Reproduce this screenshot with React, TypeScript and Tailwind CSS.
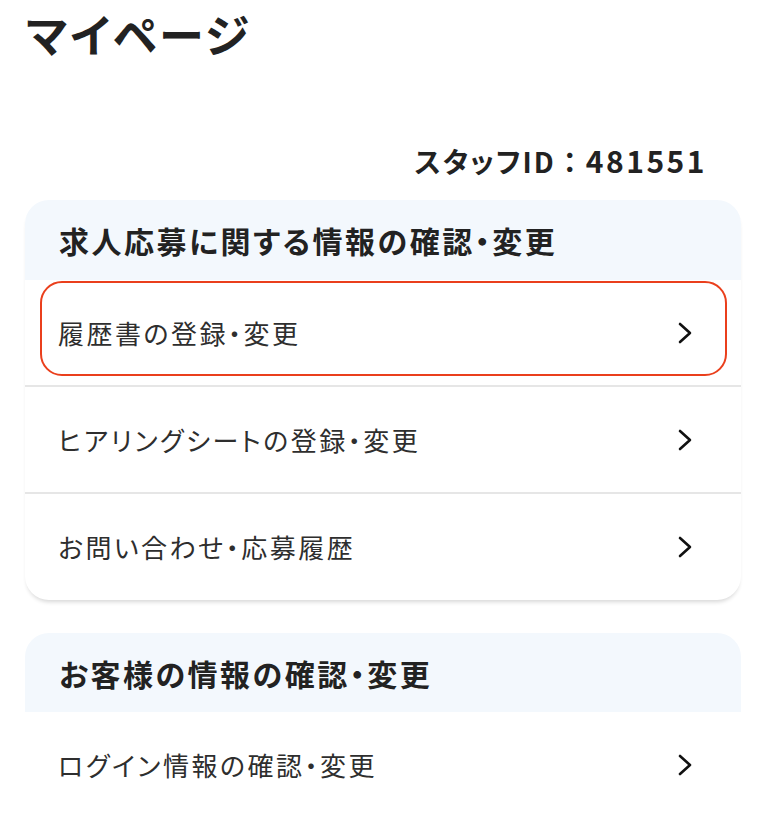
import React from "react";

const Chevron = () => (
  <svg width="16" height="24" viewBox="0 0 16 24" fill="none" aria-hidden="true">
    <polyline points="3,3 13,12 3,21" stroke="#111" strokeWidth="2.6" strokeLinecap="round" strokeLinejoin="round" />
  </svg>
);

type RowProps = { label: string; divider?: boolean; highlight?: boolean; h: string };

const Row = ({ label, divider, highlight, h }: RowProps) => (
  <div className={`relative ${h} ${divider ? "border-b-2 border-[#e6e6e6]" : ""}`}>
    <div className="flex h-full items-center justify-between pl-[33px] pr-[48px]">
      <span className="text-[26px] leading-none tracking-[2.5px] text-[#2e2e2e] [font-feature-settings:'palt']">{label}</span>
      <Chevron />
    </div>
    {highlight && (
      <div className="pointer-events-none absolute left-[15px] right-[14px] top-[1px] h-[95px] rounded-[22px] border-[2.5px] border-[#ea3f1c]" />
    )}
  </div>
);

export default function App() {
  return (
    <div className="min-h-[818px] w-[772px] overflow-hidden bg-white pl-[25px] pr-[31px] font-['Noto_Sans_CJK_JP','Noto_Sans',sans-serif] text-[#222]">
      <h1 className="mt-[11px] h-[45px] pl-[1px] text-[45px] font-bold leading-[45px] tracking-[2.5px] [font-feature-settings:'palt']">マイページ</h1>

      <div className="mt-[90px] flex h-[28px] items-center justify-end pr-[34px]">
        <span className="text-[28px] font-bold leading-[28px] tracking-[2px]">
          <span className="[font-feature-settings:'palt']">スタッフID</span>
          <span>：</span>
          <span className="text-[30px] tracking-[2.5px]">481551</span>
        </span>
      </div>

      <div className="mt-[26px] rounded-[24px] bg-white shadow-[0_4px_4px_-2px_rgba(0,0,0,0.16)]">
        <div className="flex h-[80px] items-center rounded-t-[24px] bg-[#f3f8fd] pl-[34px]">
          <span className="text-[30px] font-bold leading-none tracking-[2.5px] [font-feature-settings:'palt']">求人応募に関する情報の確認・変更</span>
        </div>
        <Row label="履歴書の登録・変更" divider highlight h="h-[107px]" />
        <Row label="ヒアリングシートの登録・変更" divider h="h-[107px]" />
        <Row label="お問い合わせ・応募履歴" h="h-[106px]" />
      </div>

      <div className="mt-[33px] rounded-[24px] bg-white">
        <div className="flex h-[79px] items-center rounded-t-[24px] bg-[#f3f8fd] pl-[34px]">
          <span className="text-[30px] font-bold leading-none tracking-[2.5px] [font-feature-settings:'palt']">お客様の情報の確認・変更</span>
        </div>
        <Row label="ログイン情報の確認・変更" h="h-[106px]" />
      </div>
    </div>
  );
}
